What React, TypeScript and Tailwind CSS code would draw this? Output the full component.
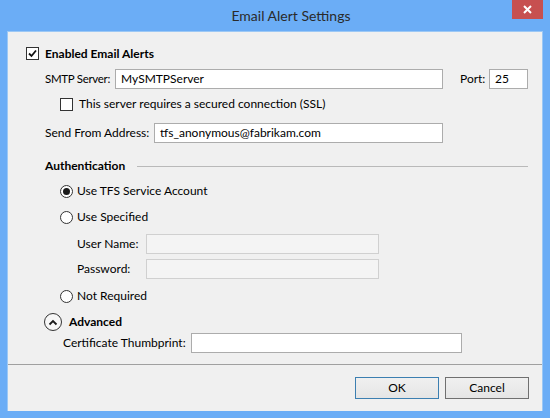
import React from "react";

const font = { fontFamily: "Lato, 'Liberation Sans', sans-serif" };

function CheckBox({ checked }: { checked?: boolean }) {
  return (
    <span className="flex h-[13px] w-[13px] shrink-0 items-center justify-center border border-[#333] bg-white">
      {checked && (
        <svg width="9" height="9" viewBox="0 0 9 9">
          <path d="M1 4.5 L3.5 7 L8 1.5" fill="none" stroke="#111" strokeWidth="1.8" />
        </svg>
      )}
    </span>
  );
}

function Radio({ checked }: { checked?: boolean }) {
  return (
    <span className="flex h-[13px] w-[13px] shrink-0 items-center justify-center rounded-full border border-[#333] bg-white">
      {checked && <span className="h-[7px] w-[7px] rounded-full bg-[#1a1a1a]" />}
    </span>
  );
}

function TextBox({ value, width, disabled }: { value?: string; width: string; disabled?: boolean }) {
  return (
    <div
      className={`flex h-[20px] shrink-0 items-center px-[5px] text-[12px] ${width} ${
        disabled ? "border border-[#d0d0d0] bg-[#f4f4f4]" : "border border-[#acacac] bg-white"
      }`}
    >
      {value}
    </div>
  );
}

function Label({ children, width }: { children: React.ReactNode; width: string }) {
  return <span className={`shrink-0 whitespace-nowrap ${width}`}>{children}</span>;
}

export default function App() {
  return (
    <div className="flex h-[418px] w-[550px] flex-col bg-[#6badf6] text-black" style={font}>
      {/* title bar */}
      <div className="flex h-[31px] items-start">
        <div className="flex h-[31px] flex-1 items-center justify-center pl-[70px] text-[14px] text-[#2a2a2a]">
          Email Alert Settings
        </div>
        <div className="mr-[7px] flex h-[19px] w-[31px] items-center justify-center bg-[#c75050]">
          <svg width="9" height="9" viewBox="0 0 9 9">
            <path d="M1 1 L8 8 M8 1 L1 8" stroke="#fff" strokeWidth="2" />
          </svg>
        </div>
      </div>

      {/* client area */}
      <div className="mx-[7px] flex h-[380px] flex-col border-t border-l border-r border-[#9cc8f5] bg-[#f0f0f0] text-[12px]">
        <div className="flex flex-1 flex-col pt-[12px]">
          <div className="flex h-[19px] items-center pl-[18px]">
            <CheckBox checked />
            <span className="ml-[6px] font-bold">Enabled Email Alerts</span>
          </div>

          <div className="mt-[6px] flex h-[20px] items-center pl-[37px]">
            <Label width="w-[70px] text-[11.5px] tracking-[-0.3px]">SMTP Server:</Label>
            <TextBox value="MySMTPServer" width="w-[328px]" />
            <Label width="ml-[17px] w-[29px]">Port:</Label>
            <TextBox value="25" width="w-[39px]" />
          </div>

          <div className="mt-[6px] flex h-[18px] items-center pl-[52px]">
            <CheckBox />
            <span className="ml-[6px]">This server requires a secured connection (SSL)</span>
          </div>

          <div className="mt-[10px] flex h-[20px] items-center pl-[37px]">
            <Label width="w-[109px]">Send From Address:</Label>
            <TextBox value="tfs_anonymous@fabrikam.com" width="w-[289px]" />
          </div>

          <div className="mt-[14px] flex h-[18px] items-center pl-[37px] pr-[14px]">
            <span className="font-bold">Authentication</span>
            <span className="ml-[12px] h-px flex-1 bg-[#b9b9b9]" />
          </div>

          <div className="mt-[7px] flex h-[18px] items-center pl-[52px]">
            <Radio checked />
            <span className="ml-[4px]">Use TFS Service Account</span>
          </div>

          <div className="mt-[8px] flex h-[18px] items-center pl-[52px]">
            <Radio />
            <span className="ml-[4px]">Use Specified</span>
          </div>

          <div className="mt-[8px] flex h-[20px] items-center pl-[69px]">
            <Label width="w-[69px]">User Name:</Label>
            <TextBox disabled width="w-[233px]" />
          </div>

          <div className="mt-[5px] flex h-[20px] items-center pl-[69px]">
            <Label width="w-[69px]">Password:</Label>
            <TextBox disabled width="w-[233px]" />
          </div>

          <div className="mt-[8px] flex h-[18px] items-center pl-[52px]">
            <Radio />
            <span className="ml-[4px]">Not Required</span>
          </div>

          <div className="mt-[8px] flex h-[18px] items-center pl-[36px]">
            <span className="flex h-[18px] w-[18px] items-center justify-center rounded-full border border-[#333] bg-[#f7f7f7]">
              <svg width="10" height="7" viewBox="0 0 10 7">
                <path d="M1.5 5.5 L5 2 L8.5 5.5" fill="none" stroke="#1a1a1a" strokeWidth="1.8" />
              </svg>
            </span>
            <span className="ml-[7px] font-bold">Advanced</span>
          </div>

          <div className="mt-[2px] flex h-[20px] items-center pl-[55px]">
            <Label width="w-[128px]">Certificate Thumbprint:</Label>
            <TextBox width="w-[271px]" />
          </div>
        </div>

        {/* footer */}
        <div className="flex h-[47px] items-start justify-end gap-[6px] border-t border-[#a0a0a0] pr-[13px] pt-[12px]">
          <button className="h-[22px] w-[84px] border border-[#3c7fb1] bg-gradient-to-b from-[#f0f0f0] to-[#e5e5e5] text-[12px]">
            OK
          </button>
          <button className="h-[22px] w-[84px] border border-[#707070] bg-gradient-to-b from-[#f0f0f0] to-[#e5e5e5] text-[12px]">
            Cancel
          </button>
        </div>
      </div>
      <div className="flex-1" />
    </div>
  );
}
